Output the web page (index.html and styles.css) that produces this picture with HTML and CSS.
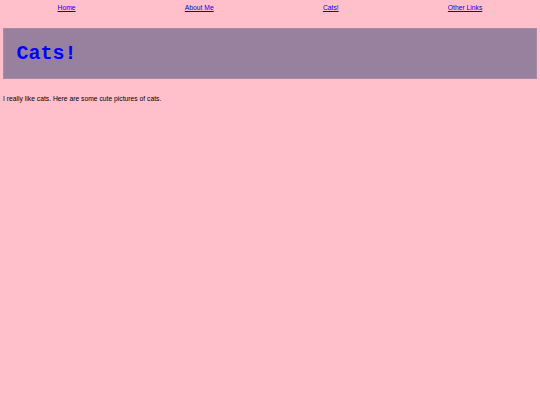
FILE: index.html
```html
<!DOCTYPE html>
<html lang="en">
<head>
<meta charset="utf-8">
<title>Cats!</title>
<link rel="stylesheet" href="styles.css">
</head>
<body>
<nav class="nav">
  <ul class="nav-list">
    <li><a href="#">Home</a></li>
    <li><a href="#">About Me</a></li>
    <li><a href="#">Cats!</a></li>
    <li><a href="#">Other Links</a></li>
  </ul>
</nav>
<header class="banner">
  <h1 class="banner-title">Cats!</h1>
</header>
<p class="intro">I really like cats. Here are some cute pictures of cats.</p>
</body>
</html>
```
FILE: styles.css
```css
html, body {
  background: #ffc0cb;
}
body {
  margin: 0;
  padding: 4px 3px;
  font-family: "Liberation Sans", Arial, sans-serif;
  font-size: 6.75px;
  color: #000;
}
.nav-list {
  list-style: none;
  margin: 0;
  padding: 0;
  display: flex;
  justify-content: space-around;
}
.nav-list a {
  color: #0000ee;
}
.banner {
  margin-top: 17.24px;
  background: #98819f;
  border: 1px solid #a88aa6;
  padding: 12.67px 12.5px;
}
.banner-title {
  margin: 0;
  font-family: "Liberation Mono", "Courier New", monospace;
  font-weight: bold;
  font-size: 20px;
  color: #0000ff;
}
.intro {
  margin: 16.5px 0 0;
}
```
